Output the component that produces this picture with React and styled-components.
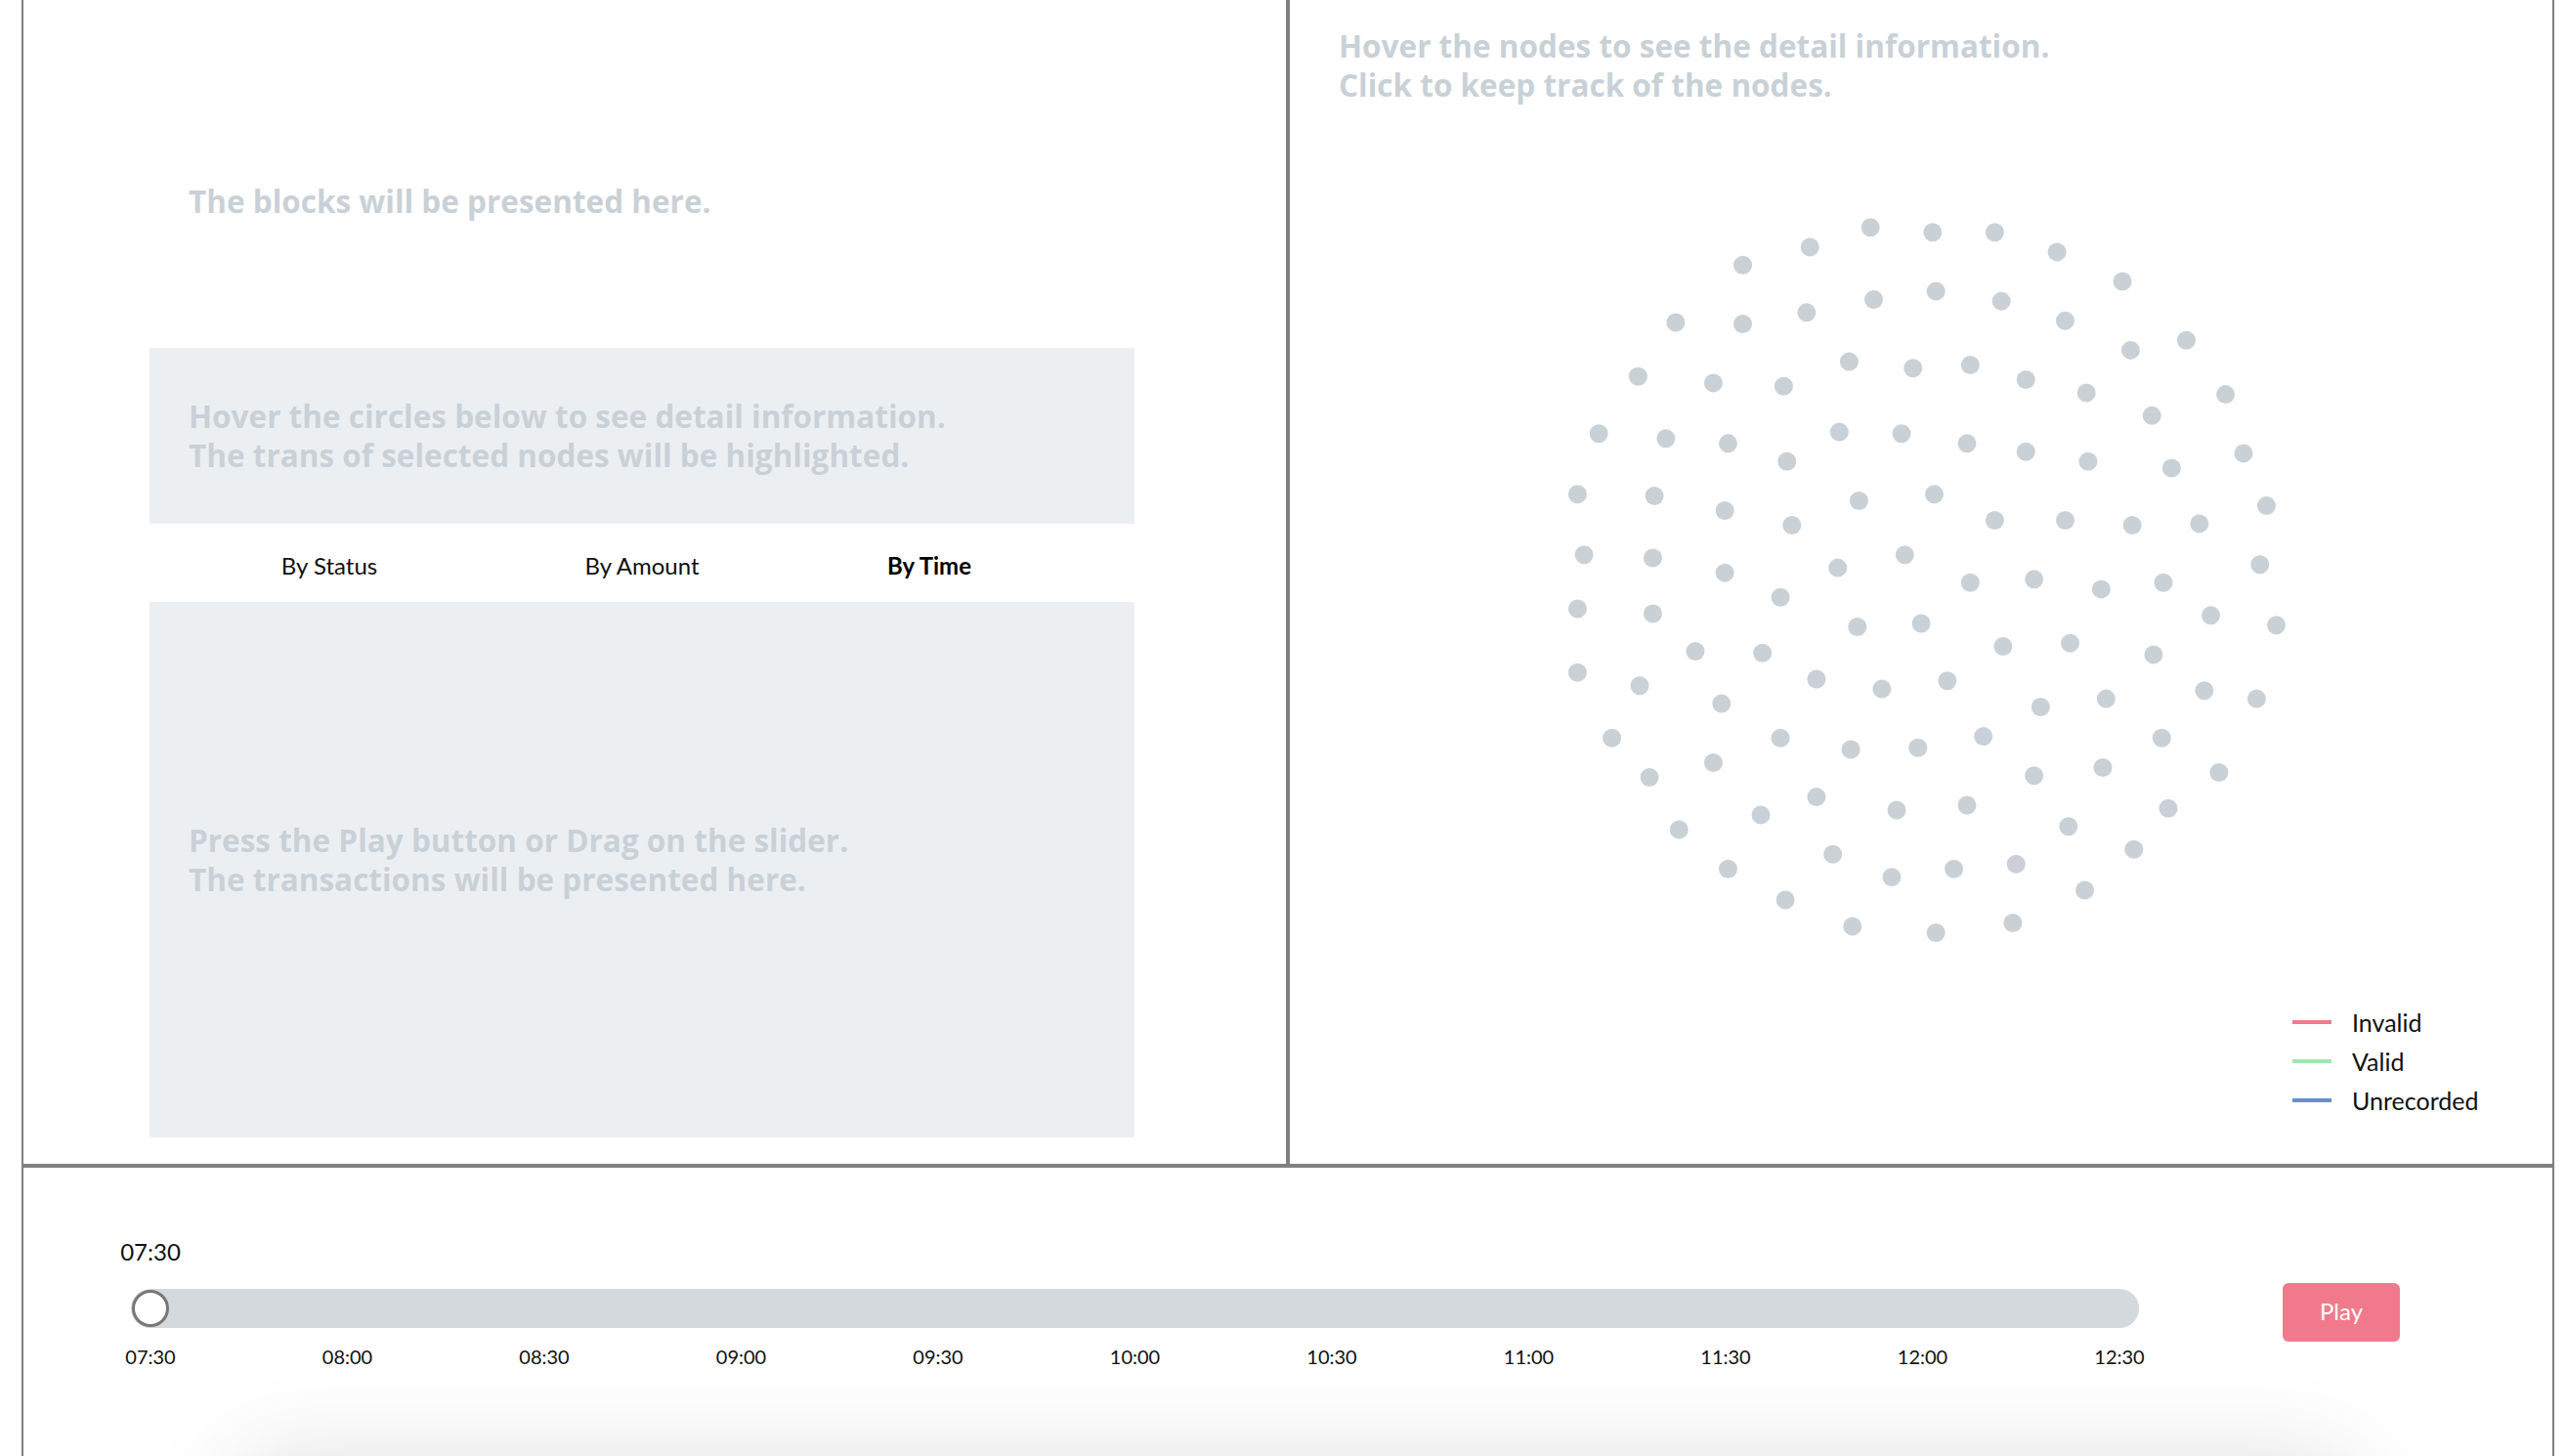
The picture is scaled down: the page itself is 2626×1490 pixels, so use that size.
import React, { useState } from "react";
import styled, { createGlobalStyle } from "styled-components";

const GlobalStyle = createGlobalStyle`
  html, body {
    margin: 0;
    padding: 0;
    background: #ffffff;
  }
  body {
    font-family: Lato, "Open Sans", "Liberation Sans", sans-serif;
    color: #111;
  }
`;

const SCALE = 1.6747;

// node positions, measured on the layout
const NODES = [
  [1143, 139], [1181, 142], [1219, 142], [1106, 151], [1257, 154], [1065, 162], [1297, 172],
  [1183, 178], [1145, 183], [1223, 184], [1104, 191], [1024, 197], [1065, 198], [1262, 196], [1336, 208], [1302, 214],
  [1130, 221], [1169, 225], [1204, 223], [1001, 230], [1047, 234], [1090, 236], [1238, 232], [1275, 240], [1360, 241], [1315, 254],
  [977, 265], [1018, 268], [1056, 271], [1124, 264], [1162, 265], [1202, 271], [1238, 276], [1276, 282], [1092, 282], [1327, 286], [1371, 277],
  [964, 302], [1011, 303], [1054, 312], [1136, 306], [1182, 302], [1219, 318], [1262, 318], [1303, 321], [1344, 320], [1095, 321], [1385, 309],
  [968, 339], [1010, 341], [1054, 350], [1123, 347], [1164, 339], [1204, 356], [1243, 354], [1284, 360], [1322, 356], [1381, 345], [1088, 365],
  [964, 372], [1010, 375], [1135, 383], [1174, 381], [1224, 395], [1265, 393], [1316, 400], [1351, 376], [1391, 382], [1036, 398], [1077, 399],
  [964, 411], [1002, 419], [1110, 415], [1150, 421], [1190, 416], [1052, 430], [1247, 432], [1287, 427], [1347, 422], [1379, 427],
  [985, 451], [1088, 451], [1131, 458], [1172, 457], [1212, 450], [1047, 466], [1008, 475], [1243, 474], [1285, 469], [1321, 451], [1356, 472],
  [1076, 498], [1110, 487], [1159, 495], [1202, 492], [1026, 507], [1264, 505], [1325, 494], [1304, 519],
  [1056, 531], [1120, 522], [1156, 536], [1194, 531], [1232, 528], [1274, 544], [1091, 550], [1132, 566], [1183, 570], [1230, 564],
];

const TICKS = [
  "07:30", "08:00", "08:30", "09:00", "09:30", "10:00",
  "10:30", "11:00", "11:30", "12:00", "12:30",
];

const LEGEND = [
  { label: "Invalid", color: "#f07a8b" },
  { label: "Valid", color: "#a2e7b1" },
  { label: "Unrecorded", color: "#6592c6" },
];

const Frame = styled.div`
  margin-left: 22px;
  width: 2588px;
  min-height: 1600px;
  border-left: 2px solid #808080;
  border-right: 2px solid #808080;
`;

const TopRow = styled.div`
  display: flex;
  height: 1191px;
  border-bottom: 4px solid #808080;
`;

const LeftPanel = styled.div`
  width: 1292px;
  border-right: 4px solid #808080;
  padding-left: 129px;
  box-sizing: content-box;
  display: flex;
  flex-direction: column;
`;

const RightPanel = styled.div`
  width: 1292px;
  display: flex;
  flex-direction: column;
`;

const Hint = styled.div`
  font-family: "Open Sans", Lato, sans-serif;
  font-size: 31.5px;
  font-weight: 700;
  line-height: 40px;
  color: #c9d1d7;
  white-space: nowrap;
`;

const BlocksArea = styled.div`
  width: 1008px;
  height: 356px;
  padding: 186px 0 0 40px;
  box-sizing: border-box;
`;

const GreyBox = styled.div`
  width: 1008px;
  height: ${(p) => p.$height}px;
  background: #eceff2;
  padding: 0 40px ${(p) => p.$lift || 0}px;
  box-sizing: border-box;
  display: flex;
  flex-direction: column;
  justify-content: center;
`;

const Tabs = styled.div`
  width: 1008px;
  height: 80px;
  display: grid;
  grid-template-columns: 368px 272px 316px;
  align-items: center;
  padding-top: 4px;
  box-sizing: border-box;
`;

const Tab = styled.div`
  text-align: center;
  font-size: 24px;
  font-weight: ${(p) => (p.$active ? 700 : 400)};
  color: ${(p) => (p.$active ? "#000" : "#111")};
  cursor: pointer;
`;

const NodeHint = styled(Hint)`
  margin: 27px 0 0 50px;
`;

const Chart = styled.svg`
  display: block;
  width: 1292px;
  height: 919px;
`;

const Legend = styled.div`
  margin-left: 1026px;
  display: flex;
  flex-direction: column;
`;

const LegendRow = styled.div`
  display: flex;
  align-items: center;
  height: 40px;
  gap: 21px;
  font-size: 25px;
  color: #111;
`;

const LegendLine = styled.span`
  width: 40px;
  height: 4px;
  background: ${(p) => p.$color};
`;

const BottomPanel = styled.div`
  display: flex;
  flex-direction: column;
  padding: 71px 0 0 110px;
`;

const Controls = styled.div`
  display: flex;
  align-items: flex-start;
`;

const SliderBlock = styled.div`
  width: 2055px;
  display: flex;
  flex-direction: column;
`;

const ValueRow = styled.div`
  padding: 0 20px;
  height: 30px;
  margin-bottom: 23px;
`;

const ValueMark = styled.div`
  width: 0;
  display: flex;
  justify-content: center;
  white-space: nowrap;
  font-size: 24px;
  line-height: 30px;
  color: #111;
`;

const Track = styled.div`
  position: relative;
  height: 40px;
  border-radius: 20px;
  background: #d3d9dd;
`;

const Handle = styled.div`
  position: absolute;
  top: 1px;
  width: 38px;
  height: 38px;
  margin-left: -19px;
  border-radius: 50%;
  border: 3px solid #777;
  background: #fff;
  box-sizing: border-box;
`;

const TickRow = styled.div`
  display: flex;
  justify-content: space-between;
  padding: 0 20px;
  margin-top: 16px;
`;

const Tick = styled.div`
  width: 0;
  display: flex;
  justify-content: center;
  white-space: nowrap;
  font-size: 20px;
  line-height: 26px;
  color: #111;
`;

const PlayButton = styled.button`
  margin: 47px 0 0 147px;
  width: 120px;
  height: 60px;
  padding: 0 0 3px;
  border: none;
  border-radius: 6px;
  background: #f07a8b;
  color: #fff;
  font-family: inherit;
  font-size: 24px;
  cursor: pointer;
`;

const ShadowCard = styled.div`
  margin: 104px 0 0 116px;
  width: 2150px;
  height: 400px;
  background: #fff;
  box-shadow: 0 0 100px rgba(0, 0, 0, 0.16);
`;

export default function App() {
  const [tab, setTab] = useState("time");
  const [value] = useState(0);
  const pct = (value / (TICKS.length - 1)) * 100;

  return (
    <>
      <GlobalStyle />
      <Frame>
        <TopRow>
          <LeftPanel>
            <BlocksArea>
              <Hint>The blocks will be presented here.</Hint>
            </BlocksArea>
            <GreyBox $height={180}>
              <Hint>Hover the circles below to see detail information.</Hint>
              <Hint>The trans of selected nodes will be highlighted.</Hint>
            </GreyBox>
            <Tabs>
              <Tab $active={tab === "status"} onClick={() => setTab("status")}>By Status</Tab>
              <Tab $active={tab === "amount"} onClick={() => setTab("amount")}>By Amount</Tab>
              <Tab $active={tab === "time"} onClick={() => setTab("time")}>By Time</Tab>
            </Tabs>
            <GreyBox $height={548} $lift={20}>
              <Hint>Press the Play button or Drag on the slider.</Hint>
              <Hint>The transactions will be presented here.</Hint>
            </GreyBox>
          </LeftPanel>
          <RightPanel>
            <NodeHint>
              Hover the nodes to see the detail information.
              <br />
              Click to keep track of the nodes.
            </NodeHint>
            <Chart viewBox="0 0 1292 919">
              {NODES.map(([x, y], i) => (
                <circle
                  key={i}
                  cx={x * SCALE - 1320}
                  cy={y * SCALE - 107}
                  r={9.5}
                  fill="#c9d1d7"
                />
              ))}
            </Chart>
            <Legend>
              {LEGEND.map((item) => (
                <LegendRow key={item.label}>
                  <LegendLine $color={item.color} />
                  {item.label}
                </LegendRow>
              ))}
            </Legend>
          </RightPanel>
        </TopRow>
        <BottomPanel>
          <Controls>
            <SliderBlock>
              <ValueRow>
                <ValueMark style={{ marginLeft: `${pct}%` }}>{TICKS[value]}</ValueMark>
              </ValueRow>
              <Track>
                <Handle style={{ left: `calc(20px + (100% - 40px) * ${pct / 100})` }} />
              </Track>
              <TickRow>
                {TICKS.map((t) => (
                  <Tick key={t}>{t}</Tick>
                ))}
              </TickRow>
            </SliderBlock>
            <PlayButton>Play</PlayButton>
          </Controls>
          <ShadowCard />
        </BottomPanel>
      </Frame>
    </>
  );
}
